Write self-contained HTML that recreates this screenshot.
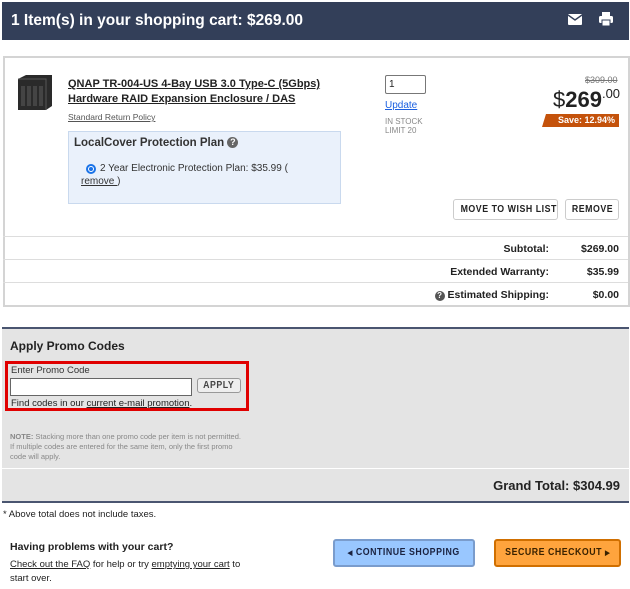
<!DOCTYPE html>
<html><head><style>
*{box-sizing:border-box;margin:0;padding:0}
body{width:630px;height:589px;background:#fff;font-family:"Liberation Sans",sans-serif;color:#222;position:relative;overflow:hidden}
.a{position:absolute}
.hdr{left:2px;top:2px;width:627px;height:38px;background:#333f59;color:#fff;font-weight:bold;font-size:15.5px;line-height:38px;padding-left:9px}
.card{left:3px;top:56px;width:627px;height:251px;border:2px solid #d4d4d4}
.btn{font-family:"Liberation Sans",sans-serif;font-weight:bold;white-space:nowrap;font-size:10px;text-align:center;border-radius:3px}
.btn span{display:inline-block;transform:scaleX(.88);letter-spacing:.6px}
.row{font-size:10.5px;font-weight:bold;text-align:right}
.line{height:1px;background:#ddd;left:3px;width:625px}
u{text-decoration:underline}
</style></head><body>
<div class="a hdr">1 Item(s) in your shopping cart: $269.00</div>
<svg class="a" style="left:568px;top:14px" width="14" height="11" viewBox="0 0 14 11"><rect width="14" height="11" rx="1" fill="#fff"/><path d="M0 1l7 5 7-5" stroke="#333f59" stroke-width="1.4" fill="none"/></svg>
<svg class="a" style="left:599px;top:12px" width="14" height="14" viewBox="0 0 14 14"><rect x="3" y="0" width="8" height="5" fill="#fff"/><rect x="0" y="4" width="14" height="7" rx="1.5" fill="#fff"/><rect x="3" y="8" width="8" height="6" fill="#fff" stroke="#333f59" stroke-width="1"/></svg>
<div class="a card"></div>
<svg class="a" style="left:16px;top:73px" width="38" height="38" viewBox="0 0 38 38"><path d="M2 6l8-4h26v31l-6 4H2z" fill="#2a2a2a"/><path d="M2 6h28v31" fill="none" stroke="#555"/><g fill="#444"><rect x="5" y="13" width="4" height="20"/><rect x="11" y="13" width="4" height="20"/><rect x="17" y="13" width="4" height="20"/><rect x="23" y="13" width="4" height="20"/></g></svg>
<div class="a" style="left:68px;top:77px;font-size:11px;font-weight:bold;line-height:15px;color:#222"><u>QNAP TR-004-US 4-Bay USB 3.0 Type-C (5Gbps)<br>Hardware RAID Expansion Enclosure / DAS</u></div>
<div class="a" style="left:68px;top:112px;font-size:8.5px;color:#555"><u>Standard Return Policy</u></div>
<div class="a" style="left:68px;top:131px;width:273px;height:73px;background:#eaf1fb;border:1px solid #c9d9ee"></div>
<div class="a" style="left:74px;top:137px;font-size:11.5px;font-weight:bold;color:#333">LocalCover Protection Plan <span style="display:inline-block;width:11px;height:11px;border-radius:50%;background:#666;color:#fff;font-size:9px;text-align:center;line-height:11px;vertical-align:1px">?</span></div>
<div class="a" style="left:86px;top:164px;width:10px;height:10px;border-radius:50%;border:2px solid #1a73e8;background:#fff"><div style="width:4px;height:4px;margin:1px;border-radius:50%;background:#1a73e8"></div></div>
<div class="a" style="left:100px;top:163px;font-size:10px;color:#333">2 Year Electronic Protection Plan: $35.99 (</div>
<div class="a" style="left:81px;top:176px;font-size:10px;color:#333"><u>remove </u>)</div>
<div class="a" style="left:385px;top:75px;width:41px;height:19px;border:1px solid #777;border-radius:2px;font-size:10px;padding:3px"> 1</div>
<div class="a" style="left:385px;top:100px;font-size:10px;color:#1a5fe0"><u>Update</u></div>
<div class="a" style="left:385px;top:117px;font-size:8px;color:#888;line-height:9px">IN STOCK<br>LIMIT 20</div>
<div class="a" style="left:585px;top:75px;font-size:9px;color:#777;text-decoration:line-through">$309.00</div>
<div class="a" style="left:553px;top:86px;font-size:22px;color:#222;white-space:nowrap">$<b>269</b><span style="font-size:13px;vertical-align:9px">.00</span></div>
<div class="a" style="left:542px;top:114px;width:77px;height:13px;background:#c4520b;clip-path:polygon(4px 0,100% 0,100% 100%,0 100%);color:#fff;font-size:9px;font-weight:bold;text-align:right;padding-right:4px;line-height:13px">Save: 12.94%</div>
<div class="a btn" style="left:453px;top:199px;width:105px;height:21px;border:1px solid #ccc;line-height:19px;color:#222"><span>MOVE TO WISH LIST</span></div>
<div class="a btn" style="left:565px;top:199px;width:54px;height:21px;border:1px solid #ccc;line-height:19px;color:#222"><span>REMOVE</span></div>
<div class="a line" style="top:236px"></div>
<div class="a line" style="top:259px"></div>
<div class="a line" style="top:282px"></div>
<div class="a row" style="left:300px;top:243px;width:249px">Subtotal:</div><div class="a row" style="left:560px;top:243px;width:59px">$269.00</div>
<div class="a row" style="left:300px;top:266px;width:249px">Extended Warranty:</div><div class="a row" style="left:560px;top:266px;width:59px">$35.99</div>
<div class="a row" style="left:300px;top:289px;width:249px"><span style="display:inline-block;width:10px;height:10px;border-radius:50%;background:#555;color:#fff;font-size:8px;text-align:center;line-height:10px">?</span> Estimated Shipping:</div><div class="a row" style="left:560px;top:289px;width:59px">$0.00</div>
<div class="a" style="left:2px;top:327px;width:627px;height:176px;background:#e4e4e4;border-top:2px solid #4a5570;border-bottom:2px solid #4a5570"></div>
<div class="a" style="left:2px;top:468px;width:627px;height:1px;background:#fff"></div>
<div class="a" style="left:10px;top:339px;font-size:12px;font-weight:bold;color:#222">Apply Promo Codes</div>
<div class="a" style="left:5px;top:361px;width:244px;height:50px;border:3px solid #e00000"></div>
<div class="a" style="left:11px;top:365px;font-size:9.5px;color:#333">Enter Promo Code</div>
<div class="a" style="left:10px;top:378px;width:182px;height:18px;background:#fff;border:1px solid #666"></div>
<div class="a btn" style="left:197px;top:378px;width:44px;height:15px;border:1px solid #999;line-height:13px;color:#444;background:#eee"><span>APPLY</span></div>
<div class="a" style="left:11px;top:398px;font-size:9.5px;color:#222">Find codes in our <u>current e-mail promotion</u>.</div>
<div class="a" style="left:10px;top:432px;font-size:7.5px;color:#888;line-height:10px"><b>NOTE:</b> Stacking more than one promo code per item is not permitted.<br>If multiple codes are entered for the same item, only the first promo<br>code will apply.</div>
<div class="a" style="left:300px;top:478px;width:320px;text-align:right;font-size:13px;font-weight:bold;color:#222">Grand Total: $304.99</div>
<div class="a" style="left:3px;top:509px;font-size:9.5px;color:#222">* Above total does not include taxes.</div>
<div class="a" style="left:10px;top:541px;font-size:10.5px;font-weight:bold;color:#222">Having problems with your cart?</div>
<div class="a" style="left:10px;top:558px;font-size:9.5px;color:#222;line-height:14px"><u>Check out the FAQ</u> for help or try <u>emptying your cart</u> to<br>start over.</div>
<div class="a btn" style="left:333px;top:539px;width:142px;height:28px;background:#99c7ff;border:2px solid #7a9ccc;line-height:24px;color:#1a2240"><span><small style="font-size:7px">&#9664;&#xFE0E;</small> CONTINUE SHOPPING</span></div>
<div class="a btn" style="left:494px;top:539px;width:127px;height:28px;background:#ffa43d;border:2px solid #d06f00;line-height:24px;color:#3a2200"><span>SECURE CHECKOUT <small style="font-size:7px">&#9654;&#xFE0E;</small></span></div>
</body></html>
